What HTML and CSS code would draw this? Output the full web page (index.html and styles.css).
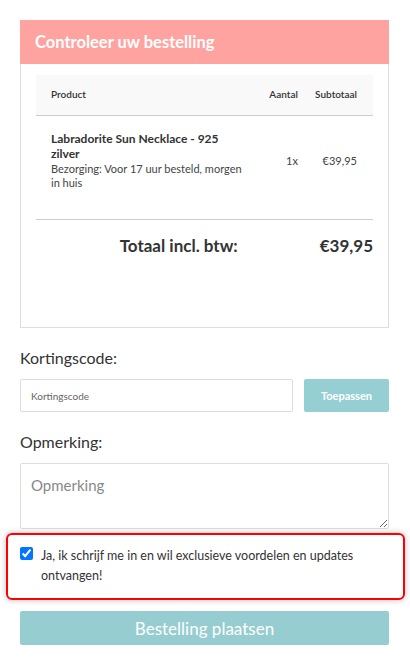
FILE: index.html
```html
<!DOCTYPE html>
<html lang="nl">
<head>
<meta charset="utf-8">
<link rel="stylesheet" href="styles.css">
</head>
<body>
<div class="page">
  <section class="card">
    <h2 class="card-head">Controleer uw bestelling</h2>
    <div class="card-body">
      <table class="order">
        <thead>
          <tr>
            <th class="c-prod">Product</th>
            <th class="c-qty">Aantal</th>
            <th class="c-sub">Subtotaal</th>
          </tr>
        </thead>
        <tbody>
          <tr class="item">
            <td class="c-prod">
              <div class="pname">Labradorite Sun Necklace - 925 zilver</div>
              <div class="pnote">Bezorging: Voor 17 uur besteld, morgen in huis</div>
            </td>
            <td class="c-qty">1x</td>
            <td class="c-sub">€39,95</td>
          </tr>
        </tbody>
      </table>
      <div class="total">
        <span class="total-label">Totaal incl. btw:</span>
        <span class="total-val">€39,95</span>
      </div>
    </div>
  </section>

  <label class="flabel" for="code">Kortingscode:</label>
  <div class="coupon">
    <input id="code" class="input" type="text" placeholder="Kortingscode">
    <button class="apply" type="button">Toepassen</button>
  </div>

  <label class="flabel" for="note">Opmerking:</label>
  <textarea id="note" class="note" placeholder="Opmerking"></textarea>

  <div class="optin">
    <input type="checkbox" class="chk" checked>
    <span class="optin-text">Ja, ik schrijf me in en wil exclusieve voordelen en updates ontvangen!</span>
  </div>

  <button class="place" type="button">Bestelling plaatsen</button>
</div>
</body>
</html>
```

FILE: styles.css
```css
* { box-sizing: border-box; }
html, body { margin: 0; padding: 0; background: #fff; }
body {
  font-family: Lato, "Noto Sans", "Liberation Sans", sans-serif;
  color: #333;
}
.page { padding: 20px 21px 20px 20px; }

.card { border: 1px solid #ddd; border-top: 0; }
.card-head {
  margin: 0 -1px;
  background: #ffa3a0;
  color: #fff;
  font-size: 16.5px;
  font-weight: 700;
  height: 44px;
  line-height: 44px;
  padding: 0 15px;
}
.card-body { padding: 11px 15px 0 15px; height: 263px; }

.order { width: 100%; border-collapse: collapse; }
.order th {
  background: #f9f9f9;
  font-size: 10px;
  font-weight: 600;
  text-align: left;
  height: 40px;
  padding-bottom: 2px;
  border-bottom: 1px solid #ccc;
  color: #333;
}
.order .c-prod { padding-left: 15px; }
.order .c-qty { width: 60px; text-align: right; padding-right: 0; }
.order .c-sub { width: 89px; text-align: right; padding-right: 16px; }
.order td { font-size: 11px; color: #444; vertical-align: middle; }
.item td { height: 104px; border-bottom: 1px solid #ccc; padding-bottom: 14px; }
.pname { font-size: 12px; font-weight: 700; line-height: 15px; color: #333; width: 180px; }
.pnote { font-size: 11px; line-height: 14px; margin-top: 1px; width: 200px; color: #444; }

.total {
  display: flex;
  justify-content: flex-end;
  align-items: center;
  height: 52px;
  font-size: 17px;
  font-weight: 700;
  color: #333;
}
.total-label { margin-right: 82px; }

.flabel {
  display: block;
  font-size: 16px;
  color: #333;
  margin: 20px 0 11px;
  line-height: 20px;
}
.coupon { display: flex; gap: 11px; }
.input {
  flex: 1;
  height: 33px;
  border: 1px solid #ddd;
  border-radius: 2px;
  padding: 0 10px;
  font-family: inherit;
  font-size: 10px;
  color: #555;
}
.input::placeholder { color: #666; }
.apply {
  width: 85px;
  height: 33px;
  border: 0;
  border-radius: 2px;
  background: #95cfd3;
  color: #fff;
  font-family: inherit;
  font-weight: 700;
  font-size: 11px;
}
.note {
  display: block;
  width: 100%;
  height: 66px;
  border: 1px solid #ddd;
  border-radius: 2px;
  padding: 12px 10px;
  font-family: inherit;
  font-size: 15px;
  resize: vertical;
}
.note::placeholder { color: #888; }

.optin {
  margin: 4px -16px 0 -14px;
  border: 2px solid #f00;
  border-radius: 6px;
  box-shadow: 0 0 6px rgba(0,0,0,0.25);
  padding: 11px 14px 10px 12px;
  display: flex;
  align-items: flex-start;
  gap: 8px;
  height: 67px;
}
.chk { margin: 1px 0 0 0; width: 13px; height: 13px; accent-color: #0075ff; flex: none; }
.optin-text { font-size: 12.5px; line-height: 20px; color: #333; }

.place {
  display: block;
  width: 100%;
  margin-top: 11px;
  height: 34px;
  border: 0;
  border-radius: 2px;
  background: #95cdd1;
  color: #fff;
  font-family: inherit;
  font-size: 17px;
}
```
